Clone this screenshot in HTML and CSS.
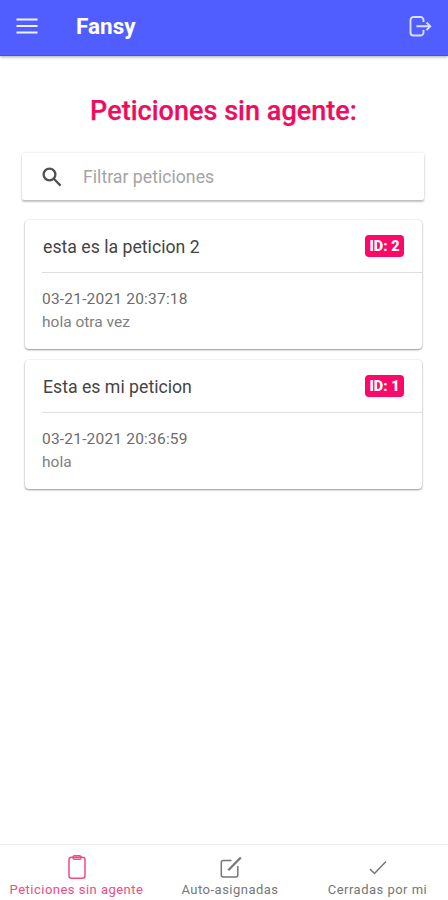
FILE: index.html
```html
<!DOCTYPE html>
<html lang="es">
<head>
<meta charset="utf-8">
<title>Fansy</title>
<link rel="stylesheet" href="styles.css">
</head>
<body>
<header class="toolbar">
  <svg class="menu" viewBox="0 0 24 18"><path d="M1.500 2.500h21M1.500 9h21M1.500 15.500h21"/></svg>
  <span class="brand">Fansy</span>
  <svg class="logout" viewBox="0 0 24 22"><path d="M15.500 7V5a3 3 0 0 0-3-3h-7a3 3 0 0 0-3 3v12.500a3 3 0 0 0 3 3h7a3 3 0 0 0 3-3V15M8.500 11.300h13.500M18.500 7.500L22.300 11.300l-3.800 3.800"/></svg>
</header>
<main class="content">
  <h1 class="title"><span>Peticiones sin agente:</span></h1>
  <div class="search">
    <svg class="lens" viewBox="0 0 20 20"><circle cx="7.500" cy="7.500" r="5.900"/><path d="M11.800 11.800L18.600 18.600"/></svg>
    <span class="placeholder">Filtrar peticiones</span>
  </div>
  <section class="cards">
    <article class="card">
      <div class="card-head"><h2 class="name">esta es la peticion 2</h2><span class="badge">ID: 2</span></div>
      <div class="card-body"><p class="date">03-21-2021 20:37:18</p><p class="message">hola otra vez</p></div>
    </article>
    <article class="card">
      <div class="card-head"><h2 class="name">Esta es mi peticion</h2><span class="badge">ID: 1</span></div>
      <div class="card-body"><p class="date">03-21-2021 20:36:59</p><p class="message">hola</p></div>
    </article>
  </section>
</main>
<nav class="tabs">
  <div class="tab active">
    <svg class="tab-icon" viewBox="0 0 24 26"><rect x="4" y="3.300" width="16" height="21" rx="2.500"/><rect x="8" y="1.700" width="8" height="3.500" rx="1.500"/></svg>
    <span>Peticiones sin agente</span>
  </div>
  <div class="tab">
    <svg class="tab-icon" viewBox="0 0 24 26"><path d="M13.500 6.500H5.300a2 2 0 0 0-2 2v12.500a2 2 0 0 0 2 2h12.500a2 2 0 0 0 2-2V12"/><path class="pencil" d="M10.300 16.200L22.800 3.500"/></svg>
    <span>Auto-asignadas</span>
  </div>
  <div class="tab">
    <svg class="tab-icon" viewBox="0 0 24 26"><path d="M4 15l4.500 4.500L20 7.500"/></svg>
    <span>Cerradas por mi</span>
  </div>
</nav>
</body>
</html>
```
FILE: styles.css
```css
* { box-sizing: border-box; }
body {
  margin: 0;
  height: 900px;
  display: flex;
  flex-direction: column;
  background: #fff;
  font-family: Roboto, sans-serif;
  overflow: hidden;
}
h1, h2, p { margin: 0; }
svg { fill: none; stroke: currentColor; flex: none; }
.toolbar {
  height: 56px;
  display: flex;
  align-items: center;
  padding: 0 16px 4px 15px;
  background: #505eff;
  color: #fff;
  box-shadow: inset 0 -1px 0 #4552d8, 0 1px 3px rgba(0, 0, 0, .35);
}
.menu { width: 24px; height: 18px; stroke-width: 2; opacity: .92; }
.brand { margin-left: 37px; font-size: 22.500px; font-weight: 700; line-height: 26px; }
.logout { width: 24px; height: 22px; margin-left: auto; stroke-width: 1.900; opacity: .8; }
.content { flex: 1; padding: 37px 24px 0 22px; }
.title {
  height: 36px;
  text-align: center;
  color: #ee0c60;
  font-size: 27px;
  font-weight: 500;
  line-height: 36px;
  letter-spacing: .03px;
  -webkit-text-stroke: .25px currentColor;
}
.title span { padding-left: 1px; }
.search {
  height: 47px;
  margin-top: 24px;
  padding: 0 20px;
  display: flex;
  align-items: center;
  border-radius: 2px;
  box-shadow: 0 2px 2px rgba(0, 0, 0, .22), 0 0 3px rgba(0, 0, 0, .12);
}
.lens { width: 20px; height: 20px; stroke-width: 2.300; color: #505050; }
.placeholder { margin-left: 21px; color: #a4a4a4; font-size: 17.700px; }
.cards { display: flex; flex-direction: column; gap: 11px; margin: 20px 2px 0 3px; }
.card {
  height: 129px;
  border-radius: 4px;
  box-shadow: 0 1px 2px rgba(0, 0, 0, .4), 0 0 2px rgba(0, 0, 0, .12);
}
.card-head {
  height: 53px;
  margin-left: 17px;
  padding-right: 18px;
  display: flex;
  align-items: center;
  justify-content: space-between;
  border-bottom: 1px solid #dedede;
}
.name { color: #444; font-size: 17.700px; font-weight: 400; line-height: 24px; padding: 2px 0 0 1px; }
.badge {
  width: 39px;
  height: 22px;
  border-radius: 4px;
  background: #fb0868;
  color: #fff;
  font-size: 14.500px;
  font-weight: 900;
  line-height: 23px;
  text-align: center;
}
.card-body { padding: 15px 17px 0; color: #808080; font-size: 15.500px; line-height: 23px; }
.date { color: #6c6c6c; letter-spacing: .2px; }
.tabs {
  height: 56px;
  display: grid;
  grid-template-columns: 153px 154px 141px;
  border-top: 1px solid #ececec;
  color: #767676;
}
.tab { display: flex; flex-direction: column; align-items: center; padding-top: 9px; font-size: 13px; line-height: 20px; letter-spacing: .48px; white-space: nowrap; }
.tab-icon { width: 24px; height: 26px; stroke-width: 1.500; }
.pencil { stroke-width: 2.200; }
.active { color: #f04b83; }
```
